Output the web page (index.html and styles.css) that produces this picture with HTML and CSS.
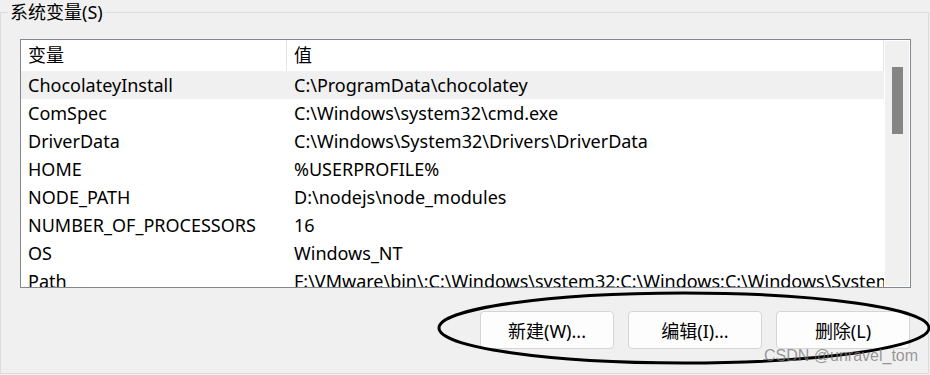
FILE: index.html
```html
<!DOCTYPE html>
<html lang="zh-CN">
<head>
  <meta charset="UTF-8">
  <title>系统变量</title>
  <link rel="stylesheet" href="styles.css">
</head>
<body>

<fieldset class="group">
  <legend>系统变量(S)</legend>

  <div class="listbox">
    <div class="list">
      <div class="row head">
        <div class="cell name">变量</div>
        <div class="cell value">值</div>
      </div>
      <div class="row hot">
        <div class="cell name">ChocolateyInstall</div>
        <div class="cell value">C:\ProgramData\chocolatey</div>
      </div>
      <div class="row">
        <div class="cell name">ComSpec</div>
        <div class="cell value">C:\Windows\system32\cmd.exe</div>
      </div>
      <div class="row">
        <div class="cell name">DriverData</div>
        <div class="cell value">C:\Windows\System32\Drivers\DriverData</div>
      </div>
      <div class="row">
        <div class="cell name">HOME</div>
        <div class="cell value">%USERPROFILE%</div>
      </div>
      <div class="row">
        <div class="cell name">NODE_PATH</div>
        <div class="cell value">D:\nodejs\node_modules</div>
      </div>
      <div class="row">
        <div class="cell name">NUMBER_OF_PROCESSORS</div>
        <div class="cell value">16</div>
      </div>
      <div class="row">
        <div class="cell name">OS</div>
        <div class="cell value">Windows_NT</div>
      </div>
      <div class="row">
        <div class="cell name">Path</div>
        <div class="cell value">F:\VMware\bin\;C:\Windows\system32;C:\Windows;C:\Windows\System32\Wbem</div>
      </div>
    </div>
    <div class="scrollbar">
      <div class="thumb"></div>
    </div>
  </div>

  <div class="buttons">
    <button class="btn">新建(W)...</button>
    <button class="btn">编辑(I)...</button>
    <button class="btn">删除(L)</button>
  </div>
</fieldset>

<svg class="circle" width="494" height="78" viewBox="0 0 494 78">
  <ellipse cx="248" cy="38" rx="245" ry="35" fill="none" stroke="#000" stroke-width="3"/>
</svg>

<div class="watermark">CSDN @unravel_tom</div>

</body>
</html>
```

FILE: styles.css
```css
body {
  margin: 0;
  background: #f0f0f0;
  font-family: 'Noto Sans', 'Noto Sans CJK SC', sans-serif;
  font-size: 18px;
  color: #000;
  width: 930px;
  height: 375px;
  overflow: hidden;
  position: relative;
}

.group {
  margin: 0;
  width: 929px;
  height: 374px;
  box-sizing: border-box;
  border: 1px solid #dcdcdc;
  padding: 15px 0 0 19px;
}

.group legend {
  margin-left: -12px;
  padding: 0 2px;
  line-height: 24px;
  height: 24px;
}

.listbox {
  display: flex;
  width: 891px;
  height: 249px;
  box-sizing: border-box;
  border: 1px solid #828790;
  background: #fff;
  overflow: hidden;
}

.list {
  flex: 1;
  overflow: hidden;
}

.row {
  display: flex;
  height: 28px;
  align-items: center;
  white-space: nowrap;
}

.row.head {
  height: 31px;
}

.row.hot {
  background: #f0f0f0;
}

.cell {
  padding-left: 7px;
  box-sizing: border-box;
  overflow: hidden;
}

.cell.name {
  width: 266px;
}

.cell.value {
  flex: 1;
}

.head .cell {
  height: 31px;
  line-height: 31px;
}

.head .cell.name {
  border-right: 1px solid #e5e5e5;
}

.head .cell.value {
  border-right: 1px solid #e5e5e5;
}

.scrollbar {
  width: 26px;
  box-sizing: border-box;
  background: #f0f0f0;
  border: 1px solid #fff;
  padding: 26px 0 0 7px;
}

.thumb {
  width: 11px;
  height: 67px;
  background: #858585;
}

.buttons {
  display: flex;
  justify-content: flex-end;
  gap: 14px;
  width: 890px;
  margin-top: 23px;
}

.btn {
  width: 134px;
  height: 38px;
  background: #fdfdfd;
  border: 1px solid #d5d5d5;
  border-radius: 4px;
  font-family: inherit;
  font-size: 18px;
  color: #000;
  padding: 0;
}

.circle {
  position: absolute;
  left: 436px;
  top: 290px;
}

.watermark {
  position: absolute;
  left: 764px;
  top: 347px;
  font-family: 'Liberation Sans', sans-serif;
  font-size: 16px;
  color: rgba(120, 120, 120, 0.75);
}
```
